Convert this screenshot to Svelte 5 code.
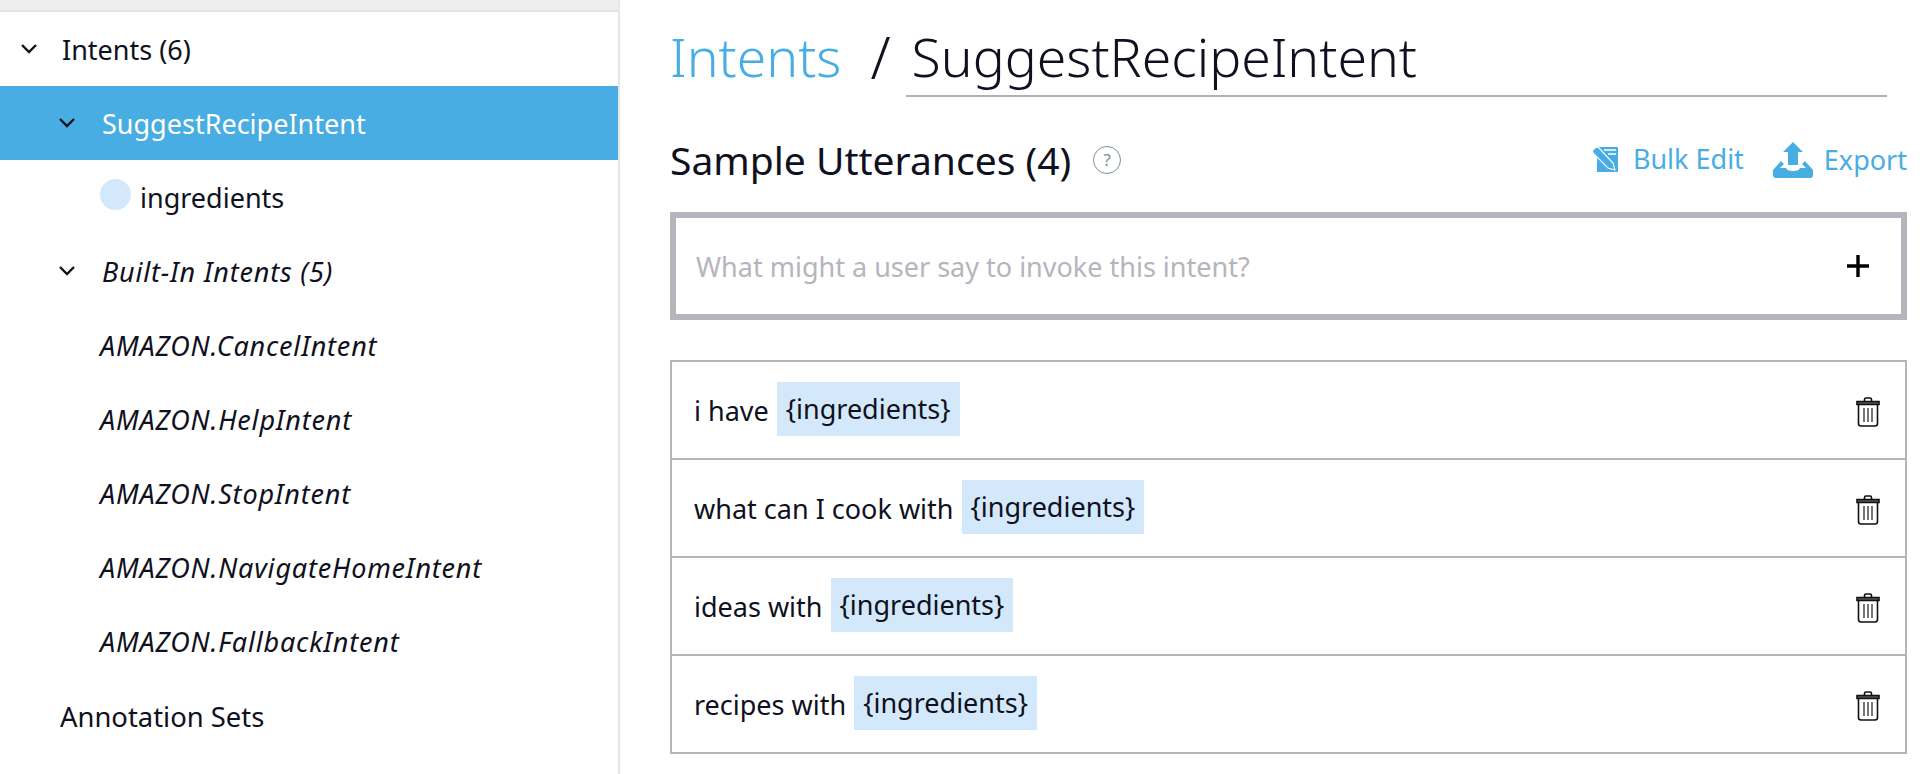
<script>
    const builtIns = ['AMAZON.CancelIntent', 'AMAZON.HelpIntent', 'AMAZON.StopIntent', 'AMAZON.NavigateHomeIntent', 'AMAZON.FallbackIntent'];
    const utterances = ['i have', 'what can I cook with', 'ideas with', 'recipes with'];
</script>

{#snippet chevron()}
    <svg class="chevron" width="18" height="12" viewBox="0 0 18 12"><path d="M2 2l7 7 7-7" fill="none" stroke="#0f1120" stroke-width="2.4"/></svg>
{/snippet}

<div class="page">
    <aside>
        <div class="topbar"></div>
        <div class="row level0">{@render chevron()}<span>Intents (6)</span></div>
        <div class="row level1 selected">{@render chevron()}<span>SuggestRecipeIntent</span></div>
        <div class="row slot"><i class="dot"></i><span>ingredients</span></div>
        <div class="row level1 em">{@render chevron()}<span>Built-In Intents (5)</span></div>
        {#each builtIns as name}
            <div class="row builtin em"><span>{name}</span></div>
        {/each}
        <div class="row plain"><span>Annotation Sets</span></div>
    </aside>

    <main>
        <header class="title">
            <a class="crumb" href="#intents">Intents</a>
            <span class="sep">/</span>
            <span class="name">SuggestRecipeIntent</span>
        </header>

        <div class="section">
            <h2>Sample Utterances (4)</h2>
            <span class="help">?</span>
            <div class="actions">
                <a class="bulk" href="#bulk">
                    <svg width="26" height="26" viewBox="0 0 26 26">
                        <path d="M5 1h21v25H5z" fill="#48ade2"/>
                        <path d="M0 5l4-4 3 1 14 15 2 7-7-2L2 8z" fill="#48ade2" stroke="#fff" stroke-width="1.1"/>
                        <path d="M12 4h12M16 8h8" stroke="#fff" stroke-width="1.4"/>
                    </svg>
                    Bulk Edit
                </a>
                <a class="export" href="#export">
                    <svg width="40" height="36" viewBox="0 0 40 36">
                        <path d="M20 0l10 10h-5v13h-10V10h-5z" fill="#48ade2"/>
                        <path d="M8 19L0 28v5q0 3 3 3h34q3 0 3-3v-5l-8-9-3 3 4 4h-6q-1 3-7 3t-7-3H7l4-4z" fill="#48ade2"/>
                    </svg>
                    Export
                </a>
            </div>
        </div>

        <div class="add">
            <span>What might a user say to invoke this intent?</span>
            <svg width="22" height="22" viewBox="0 0 22 22"><path d="M11 0v22M0 11h22" stroke="#000" stroke-width="3.4"/></svg>
        </div>

        <ul>
            {#each utterances as text}
                <li>
                    <span>{text}</span>
                    <span class="chip">{'{ingredients}'}</span>
                    <svg class="trash" width="24" height="30" viewBox="0 0 24 30" fill="none" stroke="#111" stroke-width="1.6">
                        <path d="M8.500 4V2.500q0-1.500 1.500-1.500h4q1.500 0 1.500 1.500V4"/>
                        <path d="M1 4.500h22v3H1z" fill="#555"/>
                        <path d="M2.500 8v18.500q0 2.500 2.500 2.500h14q2.500 0 2.500-2.500V8"/>
                        <path d="M8 11v14M12 11v14M16 11v14" stroke="#555"/>
                    </svg>
                </li>
            {/each}
        </ul>
    </main>
</div>

<style>
    :global(body) {
        background: #fff;
        overflow: hidden;
    }

    .page {
        display: flex;
        width: 1932px;
        height: 774px;
        font-family: "Noto Sans", sans-serif;
        color: #0f1120;
    }

    aside {
        width: 618px;
        flex: none;
        border-right: 2px solid #e6e6e6;
        font-size: 27px;
    }

    .topbar {
        height: 10px;
        background: #eeeeee;
        border-bottom: 2px solid #e2e2e2;
    }

    .row {
        display: flex;
        align-items: center;
        height: 74px;
    }

    .row span {
        padding-top: 1px;
    }

    .chevron {
        flex: none;
    }

    .level0 {
        padding-left: 20px;
        gap: 24px;
    }

    .level1 {
        padding-left: 58px;
        gap: 26px;
    }

    .selected {
        background: #48ade2;
        color: #fff;
    }

    .slot {
        padding-left: 100px;
        gap: 9px;
    }

    .dot {
        width: 31px;
        height: 31px;
        margin-top: -6px;
        border-radius: 50%;
        background: #d3e9fb;
    }

    .em {
        font-style: italic;
        letter-spacing: 0.8px;
    }

    .builtin {
        padding-left: 100px;
    }

    .plain {
        padding-left: 60px;
        font-size: 27.400px;
    }

    .plain span {
        padding-top: 3px;
    }

    main {
        flex: 1;
        padding: 0 25px 0 50px;
        min-width: 0;
    }

    .title {
        display: flex;
        align-items: flex-end;
        height: 97px;
        font-size: 53.5px;
        font-weight: 300;
    }

    .crumb {
        padding-bottom: 4px;
        color: #48ade2;
        text-decoration: none;
    }

    .sep {
        margin-left: 29px;
        padding-bottom: 4px;
        font-size: 58px;
        line-height: 1.25;
    }

    .name {
        margin-left: 15px;
        padding: 0 0 2px 6px;
        width: 975px;
        flex: none;
        border-bottom: 2px solid #a8b5b5;
    }

    .section {
        display: flex;
        align-items: center;
        box-sizing: border-box;
        height: 115px;
        padding-top: 10px;
    }

    h2 {
        margin: 0;
        font-size: 39px;
        font-weight: 400;
    }

    .help {
        width: 26px;
        height: 26px;
        margin-left: 22px;
        border: 1px solid #7d9090;
        border-radius: 50%;
        color: #7d9090;
        font-size: 17px;
        line-height: 26px;
        text-align: center;
    }

    .actions {
        display: flex;
        align-items: center;
        gap: 29px;
        margin-left: auto;
    }

    .actions a {
        display: flex;
        align-items: center;
        color: #48ade2;
        font-size: 27px;
        text-decoration: none;
    }

    .bulk {
        gap: 15px;
        margin-top: -2px;
    }

    .export {
        gap: 11px;
    }

    .add {
        display: flex;
        align-items: center;
        justify-content: space-between;
        box-sizing: border-box;
        height: 108px;
        padding: 0 32px 0 20px;
        border: 6px solid #b5b5bd;
        color: #b5b5bd;
        font-size: 27px;
    }

    ul {
        margin: 40px 0 0;
        padding: 0;
        list-style: none;
        border: 2px solid #b5b5bd;
        border-bottom-width: 0;
    }

    li {
        display: flex;
        align-items: center;
        box-sizing: border-box;
        height: 98px;
        padding-left: 22px;
        padding-right: 25px;
        border-bottom: 2px solid #b5b5bd;
        font-size: 27px;
    }

    .chip {
        margin: -2px 0 0 8px;
        padding: 0 9px;
        line-height: 54px;
        background: #d3e9fb;
    }

    .trash {
        margin: 4px 0 0 auto;
    }
</style>
